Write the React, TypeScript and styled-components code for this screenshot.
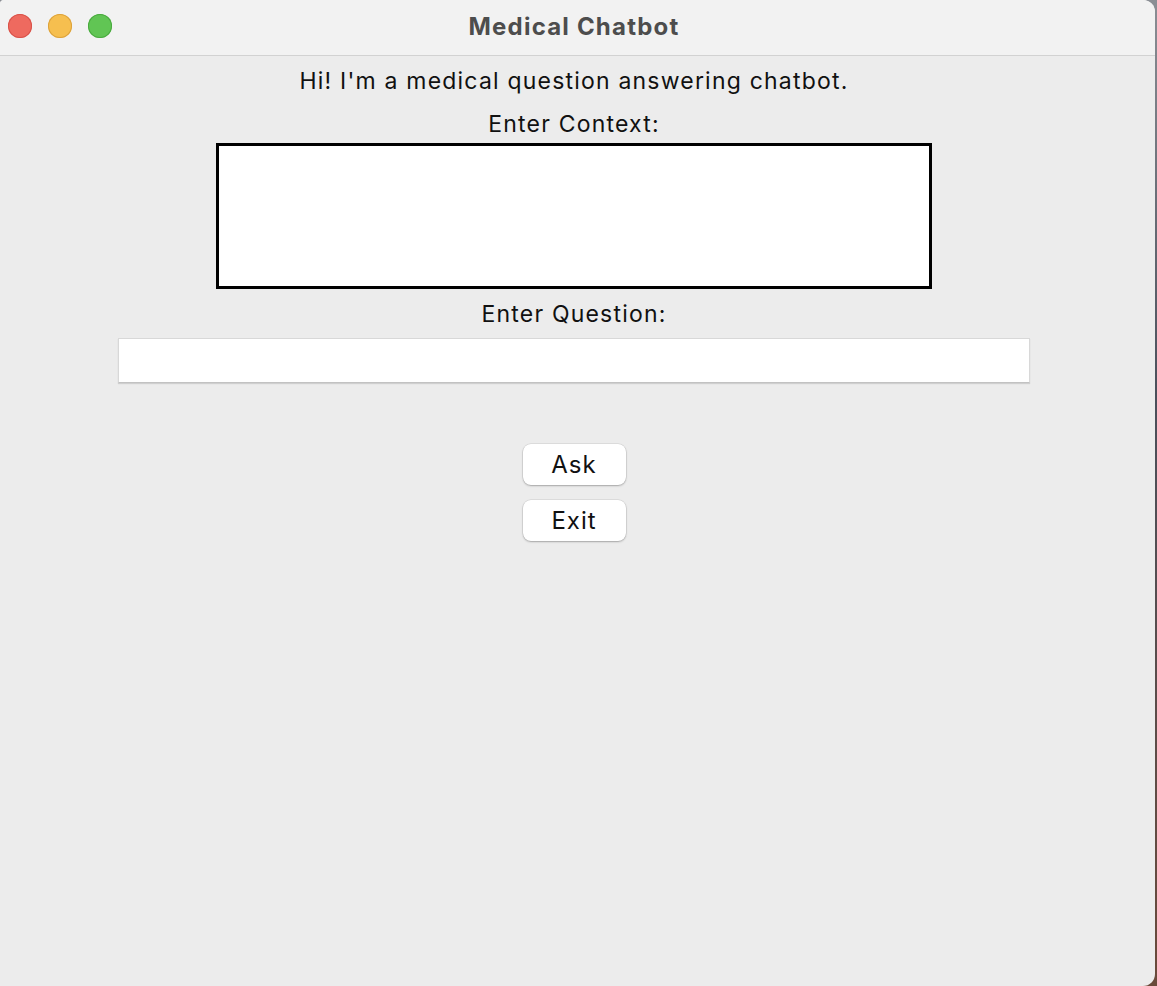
import React, { useState } from "react";
import styled, { createGlobalStyle } from "styled-components";

const GlobalStyle = createGlobalStyle`
    html, body {
        margin: 0;
        padding: 0;
    }

    body {
        width: 1157px;
        height: 986px;
        overflow: hidden;
        background: linear-gradient(180deg, #8b8e94 0%, #4a4f5a 40%, #6a4a3a 100%);
        font-family: Inter, "Liberation Sans", Arial, sans-serif;
    }
`;

const Window = styled.div`
    width: 1155px;
    height: 986px;
    display: flex;
    flex-direction: column;
    background-color: #ececec;
    border-radius: 4px 12px 12px 0;
    overflow: hidden;
`;

const TitleBar = styled.div`
    position: relative;
    height: 55px;
    flex-shrink: 0;
    display: flex;
    align-items: center;
    justify-content: center;
    padding-right: 7px;
    background-color: #f2f2f2;
    border-bottom: 1px solid #d2d2d2;
`;

const Lights = styled.div`
    position: absolute;
    left: 8px;
    top: 14px;
    display: flex;
    gap: 16px;
`;

const Light = styled.span<{ $fill: string; $edge: string }>`
    width: 24px;
    height: 24px;
    border-radius: 50%;
    background-color: ${({ $fill }) => $fill};
    box-shadow: inset 0 0 0 1px ${({ $edge }) => $edge};
`;

const Title = styled.h1`
    margin: 0 0 3px;
    font-size: 24px;
    font-weight: 700;
    color: #4d4d4d;
    letter-spacing: 1.2px;
`;

const Content = styled.main`
    display: flex;
    flex-direction: column;
    align-items: center;
    padding: 12px 7px 0 0;
`;

const Label = styled.p<{ $gap: number }>`
    margin: ${({ $gap }) => $gap}px 0 0;
    font-size: 23px;
    line-height: 26px;
    letter-spacing: 1.2px;
    color: #111;
`;

const ContextBox = styled.textarea`
    box-sizing: border-box;
    margin-top: 6px;
    width: 716px;
    height: 146px;
    border: 3px solid #000;
    background: #fff;
    resize: none;
    outline: none;
    font: inherit;
    font-size: 18px;
    padding: 6px;
`;

const QuestionInput = styled.input`
    box-sizing: border-box;
    margin-top: 11px;
    width: 912px;
    height: 45px;
    border: 1px solid #d8d8d8;
    border-bottom-color: #c2c2c2;
    box-shadow: 0 1px 1px rgba(0, 0, 0, 0.12);
    background: #fff;
    outline: none;
    font: inherit;
    font-size: 18px;
    padding: 0 8px;
`;

const Actions = styled.div`
    margin-top: 61px;
    display: flex;
    flex-direction: column;
    gap: 15px;
`;

const Button = styled.button`
    width: 103px;
    height: 41px;
    border: none;
    border-radius: 8px;
    background: #fff;
    box-shadow: 0 0 0 0.5px rgba(0, 0, 0, 0.12), 0 1px 2px rgba(0, 0, 0, 0.25);
    font-family: inherit;
    font-size: 24px;
    letter-spacing: 1px;
    color: #111;
    cursor: pointer;
    padding: 0;
`;

const App = () => {
    const [context, setContext] = useState("");
    const [question, setQuestion] = useState("");

    return (
        <>
            <GlobalStyle />
            <Window>
                <TitleBar>
                    <Lights>
                        <Light $fill="#ee6a5f" $edge="#d8524a" />
                        <Light $fill="#f6bf4f" $edge="#dca23c" />
                        <Light $fill="#61c554" $edge="#4aa93f" />
                    </Lights>
                    <Title>Medical Chatbot</Title>
                </TitleBar>
                <Content>
                    <Label $gap={0}>Hi! I'm a medical question answering chatbot.</Label>
                    <Label $gap={17}>Enter Context:</Label>
                    <ContextBox
                        value={context}
                        onChange={(e) => setContext(e.target.value)}
                    />
                    <Label $gap={12}>Enter Question:</Label>
                    <QuestionInput
                        value={question}
                        onChange={(e) => setQuestion(e.target.value)}
                    />
                    <Actions>
                        <Button>Ask</Button>
                        <Button>Exit</Button>
                    </Actions>
                </Content>
            </Window>
        </>
    );
};

export default App;
